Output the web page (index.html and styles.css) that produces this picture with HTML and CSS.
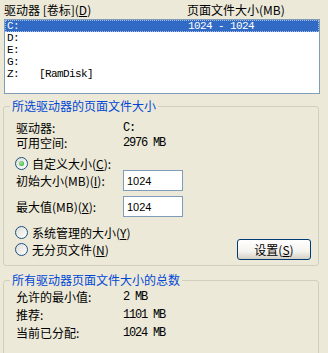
FILE: index.html
```html
<html>
<head>
    <meta charset="UTF-8">
    <title>虚拟内存</title>
    <link rel="stylesheet" href="styles.css">
</head>
<body>
    <div class="list-head">
        <span class="col-drive">驱动器 [卷标](<u>D</u>)</span>
        <span class="col-size">页面文件大小(MB)</span>
    </div>
    <div class="drive-list">
        <div class="drive selected"><span>C:</span><span></span><span>1024 - 1024</span></div>
        <div class="drive"><span>D:</span><span></span><span></span></div>
        <div class="drive"><span>E:</span><span></span><span></span></div>
        <div class="drive"><span>G:</span><span></span><span></span></div>
        <div class="drive"><span>Z:</span><span>[RamDisk]</span><span></span></div>
    </div>

    <!-- Selected drive -->
    <fieldset class="group">
        <legend>所选驱动器的页面文件大小</legend>
        <div class="group-body">
            <div class="info-row"><span>驱动器:</span><span class="mono">C:</span></div>
            <div class="info-row"><span>可用空间:</span><span class="mono">2976 MB</span></div>
            <div class="radio-row first"><span class="radio checked"></span><span>自定义大小(<u>C</u>):</span></div>
            <div class="size-row"><span>初始大小(MB)(<u>I</u>):</span><input type="text" value="1024"></div>
            <div class="size-row"><span>最大值(MB)(<u>X</u>):</span><input type="text" value="1024"></div>
            <div class="radio-row spaced"><span class="radio"></span><span>系统管理的大小(<u>Y</u>)</span></div>
            <div class="last-row">
                <span class="radio"></span><span>无分页文件(<u>N</u>)</span>
                <button type="button">设置(<u>S</u>)</button>
            </div>
        </div>
    </fieldset>

    <!-- All drives -->
    <fieldset class="group totals">
        <legend>所有驱动器页面文件大小的总数</legend>
        <div class="group-body">
            <div class="total-row"><span>允许的最小值:</span><span class="mono">2 MB</span></div>
            <div class="total-row"><span>推荐:</span><span class="mono">1101 MB</span></div>
            <div class="total-row"><span>当前已分配:</span><span class="mono">1024 MB</span></div>
        </div>
    </fieldset>
</body>
</html>
```

FILE: styles.css
```css
html, body {
    margin: 0;
    padding: 0;
    height: 353px;
    overflow: hidden;
}

body {
    background-color: #ece9d8;
    color: #000;
    font-family: "Noto Sans CJK SC", sans-serif;
    font-size: 12px;
}

u {
    text-decoration: underline;
}

.mono {
    font-family: "Liberation Mono", "Noto Sans CJK SC", monospace;
    font-size: 12px;
    letter-spacing: -1.2px;
}

.list-head {
    display: flex;
    height: 19px;
    line-height: 19px;
}

.col-drive {
    padding-left: 4px;
    width: 183px;
}

.drive-list {
    box-sizing: border-box;
    margin: 0 8px 0 4px;
    height: 75px;
    background: #fff;
    border: 1px solid #7f9db9;
}

.drive {
    display: grid;
    grid-template-columns: 32px 149px 1fr;
    align-items: center;
    height: 12px;
    padding-left: 2px;
    font-family: "Liberation Mono", "Noto Sans CJK SC", monospace;
    font-size: 11px;
    line-height: 10px;
    letter-spacing: -0.6px;
}

.drive.selected {
    background-color: #316ac5;
    color: #fff;
    outline: 1px dotted #a9bde0;
    outline-offset: -1px;
}

.group {
    margin: 6px 9px 0 3px;
    padding: 0;
    border: 1px solid #d0d0bf;
    border-radius: 3px;
    min-width: 0;
}

.group legend {
    margin-left: 6px;
    padding: 0 2px;
    color: #0046d5;
    line-height: 12px;
}

.group-body {
    padding: 8px 0 5px 12px;
}

.info-row {
    display: grid;
    grid-template-columns: 107px auto;
    align-items: center;
    height: 15px;
    line-height: 12px;
}

.radio-row {
    display: flex;
    align-items: center;
    height: 13px;
    line-height: 13px;
}

.radio-row.first {
    margin-top: 7px;
}

.radio-row.spaced {
    margin-top: 9px;
}

.radio {
    position: relative;
    box-sizing: border-box;
    width: 13px;
    height: 13px;
    margin: 0 4px 0 -1px;
    border: 1px solid #1c5180;
    border-radius: 50%;
    background: linear-gradient(135deg, #dcdcd7, #fff);
}

.radio.checked::after {
    content: "";
    position: absolute;
    left: 3px;
    top: 3px;
    width: 5px;
    height: 5px;
    border-radius: 50%;
    background: radial-gradient(circle at 40% 40%, #a0e9a0, #21a121);
}

.size-row {
    display: grid;
    grid-template-columns: 107px 60px;
    align-items: center;
    height: 21px;
}

.size-row + .size-row {
    margin-top: 5px;
}

.size-row input {
    box-sizing: border-box;
    width: 60px;
    height: 21px;
    margin: 0;
    padding: 0 3px;
    border: 1px solid #7f9db9;
    background: #fff;
    font-family: "Liberation Sans", sans-serif;
    font-size: 11px;
}

.last-row {
    display: flex;
    align-items: center;
    height: 21px;
}

.last-row button {
    box-sizing: border-box;
    width: 74px;
    height: 21px;
    margin: 0 7px 0 auto;
    padding: 0;
    border: 1px solid #003c74;
    border-radius: 3px;
    background: linear-gradient(#fff 0%, #f4f3ee 60%, #d6d0c5 100%);
    color: #000;
    font-family: "Noto Sans CJK SC", sans-serif;
    font-size: 12px;
    line-height: 19px;
}

.totals {
    margin-top: 8px;
}

.totals .group-body {
    padding: 2px 0 30px 12px;
}

.total-row {
    display: grid;
    grid-template-columns: 107px auto;
    align-items: center;
    height: 18px;
    line-height: 18px;
}
```
